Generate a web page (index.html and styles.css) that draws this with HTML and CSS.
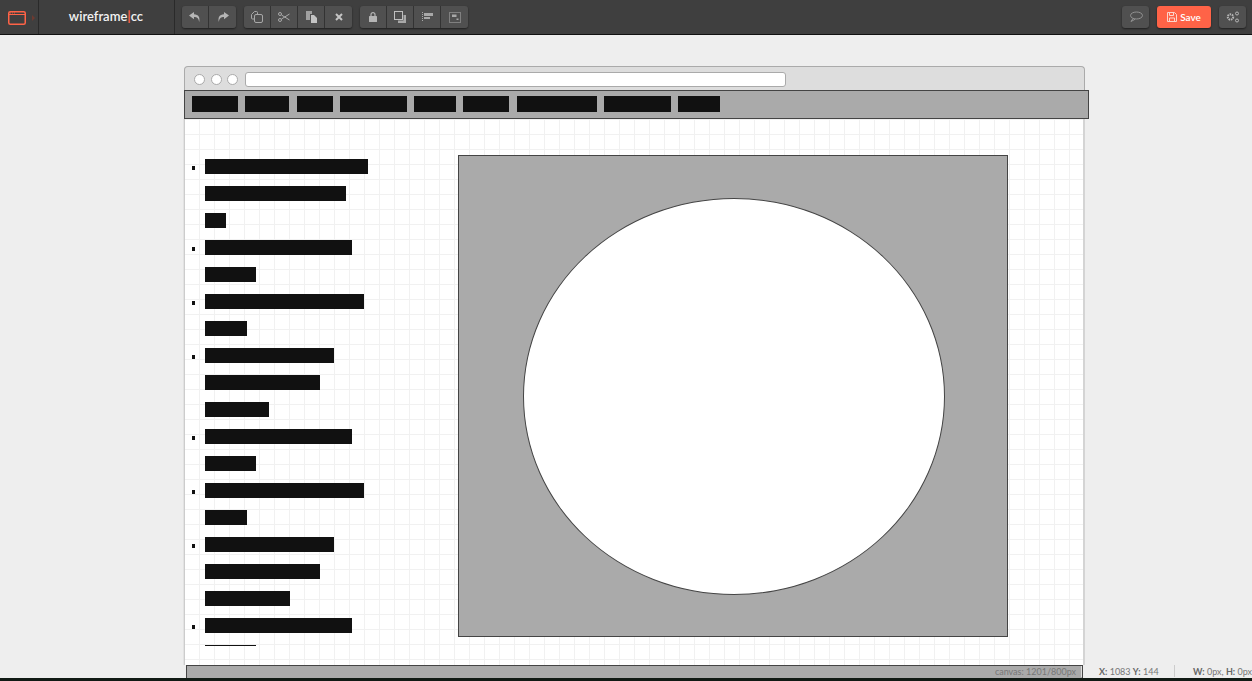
FILE: index.html
```html
<!DOCTYPE html>
<html lang="en">
<head>
<meta charset="utf-8">
<title>wireframe.cc</title>
<link rel="stylesheet" href="styles.css">
</head>
<body>
<header class="topbar">
  <div class="brand-icon">
    <svg width="18" height="14" viewBox="0 0 18 14" fill="none" stroke="#ff6347" stroke-width="1.500"><rect x=".75" y=".75" width="16.500" height="12.500" rx="1.500"/><path d="M.75 3.500h16.500" stroke-width="1"/><path d="M2 2h1M4 2h1M6 2h1" stroke-width=".8"/></svg>
    <span class="caret"></span>
  </div>
  <div class="logo">wireframe<span class="pipe">|</span>cc</div>
  <div class="group first">
    <button class="btn"><svg width="12" height="10" viewBox="0 0 12 10"><path d="M5 0 0 3.600 5 7.200V5c3 0 4.600 1 5.200 5 1-4.600-.6-7.600-5.200-7.800z" fill="#b5b5b5"/></svg></button>
    <button class="btn"><svg width="12" height="10" viewBox="0 0 12 10"><path d="M7 0l5 3.600L7 7.200V5c-3 0-4.600 1-5.200 5C.8 5.400 2.400 2.400 7 2.200z" fill="#b5b5b5"/></svg></button>
  </div>
  <div class="group">
    <button class="btn"><svg width="12" height="12" viewBox="0 0 12 12" fill="none" stroke="#a8a8a8"><path d="M3.500 8H1.500A1 1 0 0 1 .5 7V3.500L3.500.5h2a1 1 0 0 1 1 1V3"/><path d="M5 3.500h5a1.500 1.500 0 0 1 1.500 1.500v5a1.500 1.500 0 0 1-1.500 1.500H5A1.500 1.500 0 0 1 3.500 10V5A1.500 1.500 0 0 1 5 3.500z"/></svg></button>
    <button class="btn"><svg width="12" height="10" viewBox="0 0 12 10" fill="none" stroke="#a8a8a8"><circle cx="2" cy="2" r="1.500"/><circle cx="2" cy="8" r="1.500"/><path d="M3.500 3 11.500 8M3.500 7 11.500 2"/></svg></button>
    <button class="btn"><svg width="11" height="12" viewBox="0 0 11 12"><path d="M0 0h6v3H4v6H0z" fill="#a0a0a0"/><path d="M5 4h3l3 3v5H5z" fill="#c4c4c4"/></svg></button>
    <button class="btn"><svg width="8" height="8" viewBox="0 0 8 8"><path d="M1 1l6 6M7 1 1 7" stroke="#c4c4c4" stroke-width="2"/></svg></button>
  </div>
  <div class="group">
    <button class="btn"><svg width="8" height="10" viewBox="0 0 8 10"><path d="M2 4V2.600a2 2 0 0 1 4 0V4" fill="none" stroke="#b5b5b5" stroke-width="1.200"/><rect y="4" width="8" height="6" rx=".6" fill="#b5b5b5"/></svg></button>
    <button class="btn"><svg width="12" height="12" viewBox="0 0 12 12"><path d="M9.500 4H12v8H4V9.500h5.500z" fill="#a8a8a8"/><rect x=".5" y=".5" width="8" height="8" fill="none" stroke="#c0c0c0"/></svg></button>
    <button class="btn"><svg width="11" height="10" viewBox="0 0 11 10" fill="#a8a8a8"><path d="M0 0h1v1H0zM0 2h1v1H0zM0 4h1v1H0zM0 6h1v1H0zM0 8h1v1H0z"/><rect x="2" y="1" width="9" height="3"/><rect x="2" y="5" width="6" height="2"/></svg></button>
    <button class="btn"><svg width="12" height="11" viewBox="0 0 12 11"><rect x=".5" y=".5" width="11" height="10" fill="none" stroke="#b0b0b0" stroke-dasharray="1 1"/><path d="M3 2.500h4.500V5H3zM7.500 6.500H9.500V8H7.500z" fill="#a8a8a8"/></svg></button>
  </div>
  <div class="spacer"></div>
  <button class="btn solo"><svg width="14" height="12" viewBox="0 0 14 12" fill="none" stroke="#929292"><ellipse cx="7.500" cy="4.500" rx="6" ry="3.500"/><path d="M4 7.500 2 10.500l4-2.200"/></svg></button>
  <button class="btn save"><svg width="10" height="10" viewBox="0 0 10 10" fill="none" stroke="#fbd5cc"><path d="M.5.500h7l2 2v7h-9z"/><path d="M2.500.500v3h4v-3M2.500 9.500v-3.500h5v3.500"/></svg><span>Save</span></button>
  <button class="btn solo gear"><svg width="14" height="12" viewBox="0 0 14 12" fill="none" stroke="#b5b5b5"><circle cx="4.500" cy="6" r="2.700" stroke-width="2" stroke-dasharray="1.500 .8"/><circle cx="11" cy="2.500" r="1.500"/><circle cx="11" cy="9.500" r="1.500"/></svg></button>
</header>

<main class="stage">
  <section class="window">
    <div class="titlebar">
      <span class="dot"></span><span class="dot"></span><span class="dot"></span>
      <span class="address"></span>
    </div>
    <nav class="navbar">
      <span class="nav-item" style="width:46px"></span>
      <span class="nav-item" style="width:44px"></span>
      <span class="nav-item" style="width:36px"></span>
      <span class="nav-item" style="width:67px"></span>
      <span class="nav-item" style="width:42px"></span>
      <span class="nav-item" style="width:46px"></span>
      <span class="nav-item" style="width:80px"></span>
      <span class="nav-item" style="width:67px"></span>
      <span class="nav-item" style="width:42px"></span>
    </nav>
    <div class="canvas">
      <ul class="list">
        <li class="row"><i class="bullet"></i><b style="width:163px"></b></li>
        <li class="row"><b style="width:141px"></b></li>
        <li class="row"><b style="width:21px"></b></li>
        <li class="row"><i class="bullet"></i><b style="width:147px"></b></li>
        <li class="row"><b style="width:51px"></b></li>
        <li class="row"><i class="bullet"></i><b style="width:159px"></b></li>
        <li class="row"><b style="width:42px"></b></li>
        <li class="row"><i class="bullet"></i><b style="width:129px"></b></li>
        <li class="row"><b style="width:115px"></b></li>
        <li class="row"><b style="width:64px"></b></li>
        <li class="row"><i class="bullet"></i><b style="width:147px"></b></li>
        <li class="row"><b style="width:51px"></b></li>
        <li class="row"><i class="bullet"></i><b style="width:159px"></b></li>
        <li class="row"><b style="width:42px"></b></li>
        <li class="row"><i class="bullet"></i><b style="width:129px"></b></li>
        <li class="row"><b style="width:115px"></b></li>
        <li class="row"><b style="width:85px"></b></li>
        <li class="row"><i class="bullet"></i><b style="width:147px"></b></li>
        <li class="row"><b style="width:51px"></b></li>
      </ul>
      <div class="picture"><div class="circle"></div></div>
    </div>
    <div class="footer-block"></div>
  </section>
  <div class="status">
    <span class="canvas-size">canvas: 1201/800px</span>
    <span class="footer-tick"></span>
    <span class="coords"><strong>X:</strong> 1083 <strong>Y:</strong> 144</span>
    <span class="sep"></span>
    <span class="dims"><strong>W:</strong> 0px, <strong>H:</strong> 0px</span>
  </div>
</main>
<div class="edge"></div>
</body>
</html>
```
FILE: styles.css
```css
* { box-sizing: border-box; }
html, body { margin: 0; height: 681px; overflow: hidden; }
body { background: #eee; font-family: Lato, "Open Sans", sans-serif; display: flex; flex-direction: column; }

.topbar { height: 35px; flex: none; display: flex; align-items: flex-start; background: #3f3f3f; border-bottom: 1px solid #111; }
.brand-icon { width: 39px; height: 34px; display: flex; align-items: center; padding-left: 8px; border-right: 1px solid #2a2a2a; position: relative; }
.brand-icon svg { display: block; margin-top: 1px; }
.caret { width: 0; height: 0; margin-left: 6px; margin-top: 1px; border-left: 3px solid #6e3a30; border-top: 3px solid transparent; border-bottom: 3px solid transparent; }
.logo { width: 136px; height: 34px; border-right: 1px solid #2a2a2a; color: #f2f2f2; font-size: 13px; font-weight: 600; line-height: 33px; text-align: center; padding-right: 1px; }
.pipe { color: #ff6347; font-weight: 700; }
.group { display: flex; margin: 6px 0 0 8px; border-radius: 3px; box-shadow: 0 1px 2px rgba(0,0,0,.5); }
.group.first { margin-left: 7px; }
.btn { width: 27px; height: 22px; padding: 0; margin: 0; border: 0; border-right: 1px solid #333; background: #505050; display: flex; align-items: center; justify-content: center; font-family: inherit; }
.group .btn:first-child { border-radius: 3px 0 0 3px; }
.group .btn:last-child { border-radius: 0 3px 3px 0; border-right: 0; }
.spacer { flex: 1; }
.btn.solo { margin-top: 6px; border: 0; border-radius: 3px; box-shadow: 0 1px 2px rgba(0,0,0,.5); }
.btn.save { width: 54px; margin: 6px 8px 0; border: 0; border-radius: 3px; background: #ff6347; color: #fff; font-size: 10px; font-weight: 600; gap: 3px; box-shadow: 0 1px 2px rgba(0,0,0,.5); }
.btn.gear { margin-right: 6px; }

.stage { flex: 1; position: relative; padding: 31px 0 0 184px; overflow: hidden; }
.window { width: 901px; height: 612px; display: flex; flex-direction: column; }
.titlebar { height: 24px; flex: none; display: flex; align-items: center; gap: 5.5px; padding: 1px 0 0 9px; background: #ddd; border: 1px solid #aaa; border-bottom: 0; border-radius: 4px 4px 0 0; }
.dot { width: 11px; height: 11px; border-radius: 50%; background: #fff; border: 1px solid #aaa; }
.address { width: 541px; height: 15px; margin-left: 1.5px; background: #fff; border: 1px solid #aaa; border-radius: 3px; }
.navbar { width: 905px; height: 29px; flex: none; position: relative; display: flex; align-items: center; padding: 0 0 1px 7px; gap: 7.25px; background: #aaa; border: 1px solid #444; }
.nav-item { height: 16px; background: #111; }

.canvas { flex: 1; min-height: 0; position: relative; background-color: #fff; background-image: linear-gradient(#f1f1f1 1px, transparent 1px), linear-gradient(90deg, #f1f1f1 1px, transparent 1px); background-size: 15px 15px; background-position: -1px 0; border-left: 1px solid #ccc; border-right: 2px solid #d4d4d4; box-shadow: -1px 0 0 #e2e2e2; }
.list { list-style: none; margin: 0; padding: 40px 0 0 20px; height: 527px; overflow: hidden; }
.row { height: 27px; position: relative; }
.row b { display: block; height: 15px; background: #111; }
.bullet { position: absolute; left: -13px; top: 7px; width: 3px; height: 4px; background: #111; }
.picture { position: absolute; left: 273px; top: 36px; width: 550px; height: 482px; background: #aaa; border: 1px solid #444; }
.circle { position: absolute; left: 64px; top: 42px; width: 422px; height: 397px; border-radius: 50%; background: #fff; border: 1px solid #444; }
.footer-block { height: 13px; flex: none; margin: 0 2px; background: #aaa; border: 1px solid #444; border-bottom: 0; }

.status { position: absolute; left: 0; right: 0; bottom: 3px; height: 13px; font-size: 9px; line-height: 13px; color: #777; }
.status strong { color: #666; font-weight: 700; }
.canvas-size { position: absolute; right: 176px; }
.footer-tick { position: absolute; left: 1081px; top: 1px; width: 1px; height: 11px; background: #ddd; }
.coords { position: absolute; left: 1099px; }
.sep { position: absolute; left: 1174px; top: 0; width: 1px; height: 12px; background: #ccc; }
.dims { position: absolute; left: 1193px; }
.edge { position: absolute; left: 0; right: 0; top: 678px; height: 3px; background: #111a14; }
```
